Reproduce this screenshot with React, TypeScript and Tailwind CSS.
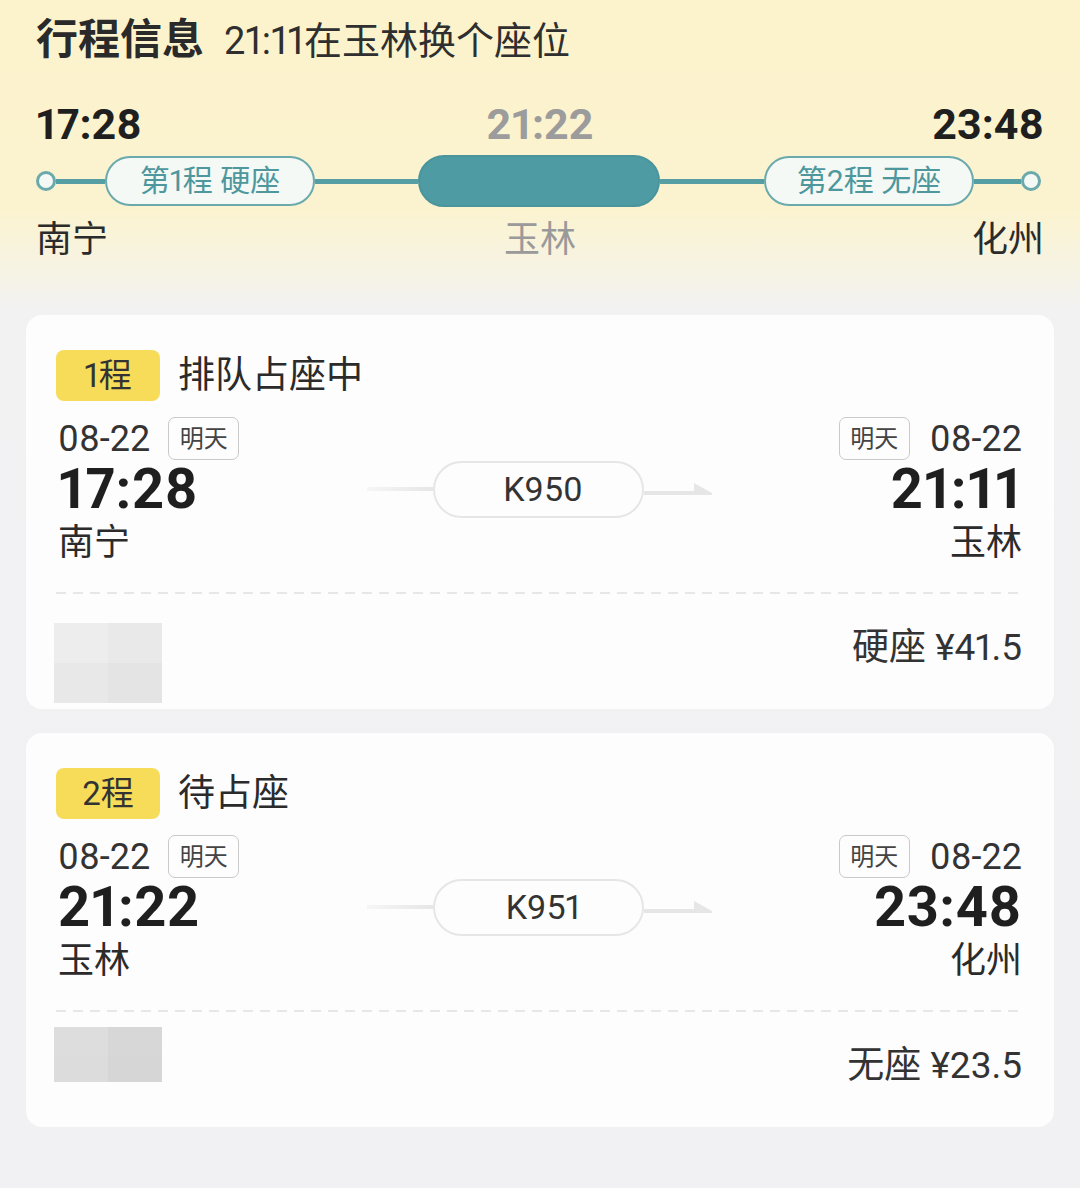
import React from 'react';

type Leg = {
  no: number;
  status: string;
  train: string;
  date: string;
  dep: string;
  arr: string;
  from: string;
  to: string;
  seat: string;
  price: string;
  mosaicClass: string;
  mosaic: string[];
};

const legs: Leg[] = [
  {
    no: 1,
    status: '排队占座中',
    train: 'K950',
    date: '08-22',
    dep: '17:28',
    arr: '21:11',
    from: '南宁',
    to: '玉林',
    seat: '硬座',
    price: '¥41.5',
    mosaicClass: 'mt-[29px] h-[80px]',
    mosaic: ['bg-[#ededed]', 'bg-[#e9e9e9]', 'bg-[#e8e8e8]', 'bg-[#e4e4e4]']
  },
  {
    no: 2,
    status: '待占座',
    train: 'K951',
    date: '08-22',
    dep: '21:22',
    arr: '23:48',
    from: '玉林',
    to: '化州',
    seat: '无座',
    price: '¥23.5',
    mosaicClass: 'mt-[15px] h-[55px]',
    mosaic: ['bg-[#dddddd]', 'bg-[#d7d7d7]', 'bg-[#dcdcdc]', 'bg-[#d6d6d6]']
  }
];

function DayTag() {
  return (
    <span className="inline-flex h-[43px] w-[71px] items-center justify-center rounded-[7px] border-[1.5px] border-[#c9c9c9] text-[24px] leading-none text-[#444]">
      明天
    </span>
  );
}

function SegmentPill({ label }: { label: string }) {
  return (
    <div className="flex h-[50px] w-[210px] shrink-0 items-center justify-center rounded-full border-2 border-[#6aa9ac] bg-[#f4f9f5] text-[30px] leading-none text-[#4d979d]">
      {label}
    </div>
  );
}

function LegCard({ leg }: { leg: Leg }) {
  return (
    <div className="rounded-[16px] bg-[#fdfdfd] pl-[30px] pr-[32px] pt-[35px]">
      {/* Title */}
      <div className="flex items-center gap-[18px]">
        <span className="flex h-[51px] w-[104px] items-center justify-center rounded-[8px] bg-[#f6dc58] text-[33px] leading-none text-[#333]">
          {leg.no}程
        </span>
        <span className="text-[37px] leading-none text-[#2b2b2b]">{leg.status}</span>
      </div>

      {/* Route */}
      <div className="mt-[16px] grid grid-cols-[1fr_auto_1fr] items-center">
        <div className="flex flex-col items-start pl-[2px]">
          <div className="flex items-center gap-[18px]">
            <span className="text-[36px] leading-none text-[#333]">{leg.date}</span>
            <DayTag />
          </div>
          <span className="mt-[1px] text-[56px] font-bold leading-none tracking-[0.5px] text-[#1f1f1f]">{leg.dep}</span>
          <span className="mt-[8px] text-[36px] leading-none text-[#2b2b2b]">{leg.from}</span>
        </div>

        <div className="flex items-center">
          <div className="h-[4px] w-[66px] bg-gradient-to-r from-[#f6f6f6] to-[#e6e6e6]" />
          <div className="flex h-[57px] w-[211px] items-center justify-center rounded-full border-2 border-[#e6e6e6] pl-[10px] text-[34px] leading-none text-[#333]">
            {leg.train}
          </div>
          <svg width="68" height="14" viewBox="0 0 68 14" className="block">
            <polygon points="0,9 50,9 50,1 68,11 68,13 0,13" fill="#e6e6e6" />
          </svg>
        </div>

        <div className="flex flex-col items-end">
          <div className="flex items-center gap-[20px]">
            <DayTag />
            <span className="text-[36px] leading-none text-[#333]">{leg.date}</span>
          </div>
          <span className="mt-[1px] text-[56px] font-bold leading-none tracking-[0.5px] text-[#1f1f1f]">{leg.arr}</span>
          <span className="mt-[8px] text-[36px] leading-none text-[#2b2b2b]">{leg.to}</span>
        </div>
      </div>

      {/* Dashed divider */}
      <div className="mt-[31px] h-[2px] bg-[repeating-linear-gradient(90deg,#e7e7e7_0px,#e7e7e7_10px,transparent_10px,transparent_17px)]" />

      {/* Footer */}
      <div className="flex h-[115px] items-start justify-between">
        <div className={`grid w-[108px] grid-cols-2 grid-rows-2 -ml-[2px] ${leg.mosaicClass}`}>
          {leg.mosaic.map((c, i) => (
            <div key={i} className={c} />
          ))}
        </div>
        <span className="mt-[35px] text-[37px] leading-none text-[#333]">
          {leg.seat} {leg.price}
        </span>
      </div>
    </div>
  );
}

export default function App() {
  return (
    <div className="min-h-[1188px] w-[1080px] bg-[linear-gradient(180deg,#fcf3cc_0px,#fbf3d0_210px,#f7f3e2_265px,#f2f2f3_312px,#f1f1f3_1188px)] font-['Roboto','Noto_Sans_CJK_SC',sans-serif] proportional-nums pb-[62px]">
      {/* Header */}
      <div className="px-[36px] pt-[19px]">
        <div className="flex items-baseline gap-[20px]">
          <h1 className="text-[42px] font-bold leading-none text-[#2a2a2a]">行程信息</h1>
          <span className="text-[38px] leading-none text-[#2f2f2f]">21:11在玉林换个座位</span>
        </div>

        {/* Timeline */}
        <div className="mt-[42px] grid grid-cols-3 text-[43px] font-bold leading-none">
          <span className="text-left text-[#1f1f1f]">17:28</span>
          <span className="text-center text-[#9c9c9c]">21:22</span>
          <span className="text-right text-[#1f1f1f]">23:48</span>
        </div>

        <div className="mt-[10px] flex h-[50px] items-center">
          <div className="h-[20px] w-[20px] shrink-0 rounded-full border-[3px] border-[#6aa9ac] bg-[#f4f9f5]" />
          <div className="h-[5px] w-[49px] bg-[#559fa4]" />
          <SegmentPill label="第1程 硬座" />
          <div className="h-[5px] w-[103px] bg-[#559fa4]" />
          <div className="h-[52px] w-[242px] shrink-0 rounded-full border-2 border-[#4a949c] bg-[#4e9ba3]" />
          <div className="h-[5px] w-[104px] bg-[#559fa4]" />
          <SegmentPill label="第2程 无座" />
          <div className="h-[5px] w-[47px] bg-[#559fa4]" />
          <div className="h-[20px] w-[20px] shrink-0 rounded-full border-[3px] border-[#6aa9ac] bg-[#f4f9f5]" />
        </div>

        <div className="mt-[16px] grid grid-cols-3 text-[36px] leading-none">
          <span className="text-left text-[#2b2b2b]">南宁</span>
          <span className="text-center text-[#9a9a9a]">玉林</span>
          <span className="text-right text-[#2b2b2b]">化州</span>
        </div>
      </div>

      {/* Leg cards */}
      <div className="mt-[57px] flex flex-col gap-[24px] px-[26px]">
        {legs.map(leg => (
          <LegCard key={leg.no} leg={leg} />
        ))}
      </div>
    </div>
  );
}
